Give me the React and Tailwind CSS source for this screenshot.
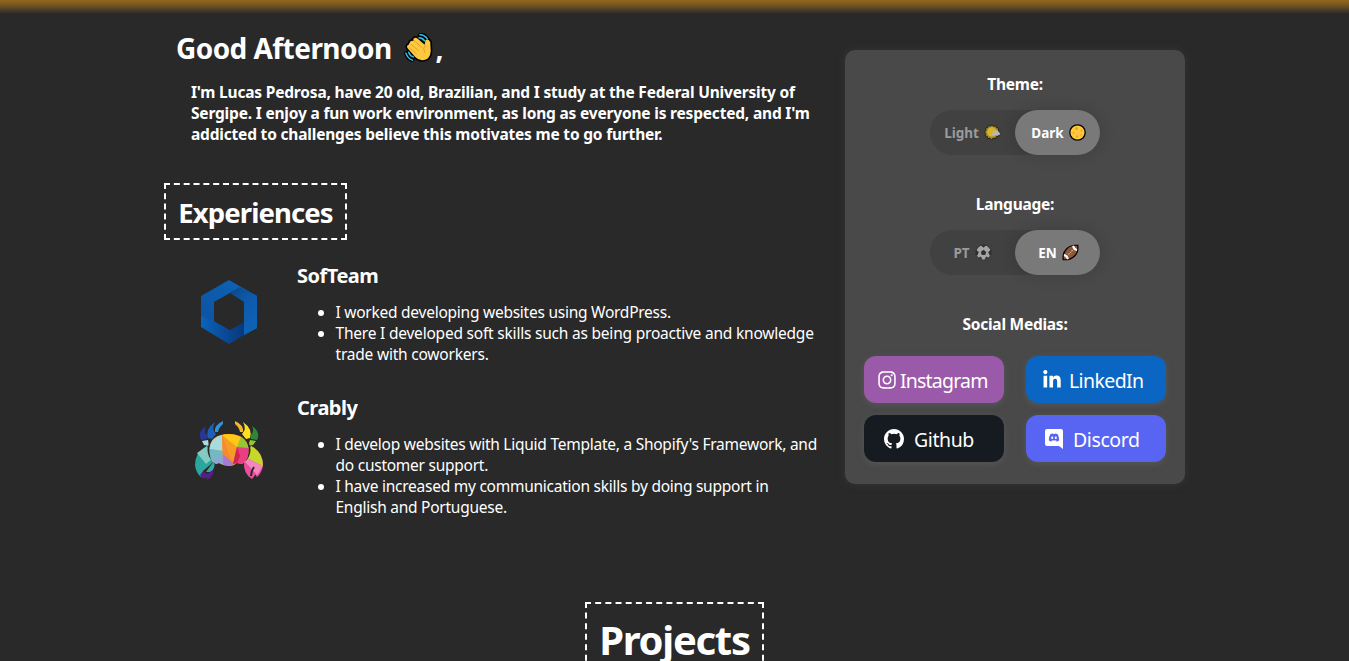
import React from "react";
import { FaInstagram, FaLinkedinIn } from "react-icons/fa";

function WaveHand() {
  return (
    <svg viewBox="0 0 32 32" className="h-[31px] w-[30px] shrink-0" fill="none">
      <path d="M6 11 Q7 8 10 9 L10 7 Q12 4 15 7 L22 13 L23 8 Q26 6 28 10 L28.5 20 Q28 29 20 29.5 Q16 30 12 26 L4 17 Q2 14 5 13Z" stroke="#000" strokeWidth="3.500" strokeLinejoin="round" />
      <path d="M17 3Q22 2 25 7M2.5 22Q4 28 9 29" stroke="#000" strokeWidth="4.500" strokeLinecap="round" />
      <path d="M6 11 Q7 8 10 9 L10 7 Q12 4 15 7 L22 13 L23 8 Q26 6 28 10 L28.5 20 Q28 29 20 29.5 Q16 30 12 26 L4 17 Q2 14 5 13Z" fill="#ffc83d" />
      <path d="M11 9l8 7M7.500 12.500l8 7M6 16.500l7 6M22.500 14q-3 3.500 0 7.500" stroke="#dc9a28" strokeWidth=".9" strokeLinecap="round" />
      <path d="M17 2.500Q22 2.500 25 7M16 5.500q4 0 6 3.500M2 22Q4 28 9 29.500M5 21Q6 25 10 26" stroke="#35c1f1" strokeWidth="1.600" strokeLinecap="round" />
    </svg>
  );
}

function Sun() {
  return (
    <svg viewBox="0 0 17 17" className="h-[17px] w-[17px] shrink-0">
      <path d="M8 .8l1.500 1.600 2.200-.9.6 2.200 2.400.4-.3 2.300 1.600 1.900-1.600 1.700.3 2.300-2.500.5-.9 2.200-2.100-.9-1.700 1.600-1.600-1.600-2.300.6-.4-2.400-2.300-.6.800-2.200L.5 8l1.500-1.700-.5-2.200 2.300-.5.600-2.200 2.100.8z" fill="#a98e22" stroke="#252525" strokeWidth="1" />
      <circle cx="7.800" cy="8" r="4.700" fill="#d6b42b" />
      <path d="M8.500 11.300q-1.500-2.800 1.300-3.200.8-3 3.300-1.600 1.200.7 1.200 1.900 1.800 0 1.800 1.400t-2 1.500z" fill="#b8b8b8" />
    </svg>
  );
}

function Moon() {
  return (
    <svg viewBox="0 0 17 17" className="h-[17px] w-[17px] shrink-0">
      <circle cx="8.500" cy="8.500" r="7.700" fill="#ffc83d" stroke="#000" strokeWidth="1.300" />
      <g fill="#e9a625"><circle cx="7.500" cy="4.500" r="1.500" /><circle cx="4.500" cy="9" r="1" /><circle cx="12.500" cy="6.500" r="1" /><circle cx="8" cy="12.500" r="1.200" /><circle cx="12" cy="11" r=".8" /></g>
    </svg>
  );
}

function Soccer() {
  return (
    <svg viewBox="0 0 17 17" className="h-[17px] w-[17px] shrink-0">
      <circle cx="8.500" cy="8.500" r="7.700" fill="#a5a5a5" stroke="#2c2c2c" strokeWidth="1" />
      <g fill="#303030">
        <path d="M8.500 5.800l2.700 2.100-1 3.100H6.800l-1-3.100z" />
        <path d="M5.700.9h5.600L8.500 3.700zM.8 5.700l3 2.400-1.300 3.500-1.500-.8zM16.200 5.700l-3 2.400 1.300 3.500 1.500-.8zM3 14l2.900-1.600 1.500 3.400zM14 14l-2.900-1.600-1.500 3.400z" />
      </g>
    </svg>
  );
}

function Football() {
  return (
    <svg viewBox="0 0 18 18" className="h-[17px] w-[17px] shrink-0">
      <path d="M1.300 16.500Q.3 9.500 5 5T16.700 1.500q1 7-3.700 11.500T1.300 16.500z" fill="#8b5738" stroke="#000" strokeWidth="1.300" />
      <path d="M2.300 10.500q4 1 5 5.500l-2 .5Q4.500 13.500 1.900 12.800zM15.700 7.500q-4-1-5-5.500l2-.5q.8 3 3.400 3.700z" fill="#fff" />
      <path d="M6 12l6-6M6.500 10l1.500 1.500M8.300 8.300l1.500 1.500M10 6.500L11.500 8" stroke="#e8d8cc" strokeWidth=".7" strokeDasharray="1 .6" />
    </svg>
  );
}

function GithubMark() {
  return (
    <svg viewBox="0 0 16 16" className="h-[20px] w-[20px] shrink-0" fill="currentColor">
      <path d="M8 0C3.580 0 0 3.580 0 8c0 3.540 2.290 6.530 5.470 7.590.4.070.55-.17.55-.38 0-.19-.010-.82-.010-1.490-2.010.37-2.530-.49-2.690-.94-.090-.23-.48-.94-.82-1.130-.28-.15-.68-.52-.010-.53.630-.010 1.080.58 1.230.82.72 1.210 1.870.87 2.330.66.070-.52.28-.87.510-1.070-1.780-.2-3.640-.89-3.640-3.950 0-.87.31-1.590.82-2.150-.080-.2-.36-1.020.080-2.120 0 0 .67-.21 2.200.82a7.600 7.600 0 0 1 4 0c1.530-1.040 2.200-.82 2.200-.82.44 1.100.16 1.920.080 2.120.51.56.82 1.270.82 2.150 0 3.070-1.870 3.750-3.650 3.950.29.25.54.73.54 1.480 0 1.070-.010 1.930-.010 2.200 0 .21.15.46.55.38A8.010 8.010 0 0 0 16 8c0-4.420-3.580-8-8-8z" />
    </svg>
  );
}

function DiscordMark() {
  return (
    <svg viewBox="0 0 18 20" className="h-[20px] w-[18px] shrink-0">
      <path d="M2 0h14q2 0 2 2v18l-4-3H2q-2 0-2-2V2Q0 0 2 0z" fill="#fff" />
      <path d="M5.300 5.300Q7 4.300 8 4.600l.3.500h1.400l.3-.5q1-.3 2.700.7 1.600 3 1.500 6-1.200 1.200-2.700 1.200l-.6-.8.9-.6q-2.800 1-5.600 0l.9.600-.6.800q-1.500 0-2.700-1.200-.1-3 1.500-6z" fill="#5865f2" />
      <ellipse cx="7.200" cy="8.800" rx="1" ry="1.200" fill="#fff" /><ellipse cx="10.800" cy="8.800" rx="1" ry="1.200" fill="#fff" />
    </svg>
  );
}

function HexLogo() {
  return (
    <svg viewBox="0 0 58 64" className="h-[64px] w-[58px]">
      <defs>
        <linearGradient id="ha" x1="0" y1="1" x2="1" y2="0"><stop offset="0" stopColor="#0d509f" /><stop offset="1" stopColor="#0c66ba" /></linearGradient>
        <linearGradient id="hb" x1="0" y1="0" x2=".6" y2="1"><stop offset="0" stopColor="#0b4384" /><stop offset=".45" stopColor="#0e59ab" /><stop offset="1" stopColor="#0d62b5" /></linearGradient>
        <linearGradient id="hc" x1="0" y1="0" x2="1" y2="0"><stop offset="0" stopColor="#0b62bc" /><stop offset="1" stopColor="#08387b" /></linearGradient>
      </defs>
      <path d="M1 16L29 0 57 16V48L44 55V22L30 14 14 22V49L1 41z" fill="url(#ha)" />
      <path d="M29 13L40 7 57 16V48L44 55V22z" fill="url(#hb)" />
      <path d="M1 36L14 41 30 50 44 42V55L29 64 1 47z" fill="url(#hc)" />
      <path d="M14 22L30 13 44 22V41L30 50 14 41z" fill="#292929" />
    </svg>
  );
}

function CrabLogo() {
  return (
    <svg viewBox="0 0 70 60" className="h-[60px] w-[70px]">
      <path d="M12 5Q3 11 7 19L13 18 14 15Q9 11 12 5z" fill="#263795" />
      <path d="M21 1Q11 8 14 17L18 18 22 13Q17 8 21 1z" fill="#1c5fb9" />
      <path d="M29 0Q20 4 21 11L24 11Q25 6 29 3z" fill="#3392d8" />
      <path d="M41 0Q50 4 49 11L46 11Q45 6 41 3z" fill="#f2b62a" />
      <path d="M49 1Q59 8 56 17L52 18 48 13Q53 8 49 1z" fill="#ffe01f" />
      <path d="M58 5Q67 11 63 19L57 18 56 15Q61 11 58 5z" fill="#2c8736" />
      <path d="M8 20l6-1 1 6-5-1z" fill="#a6dce6" />
      <path d="M56 19l6 1-3 4-5 1z" fill="#95c72a" />
      <path d="M13 25Q1 31 1 44 2 52 7 56L9 50 16 44 20 40 17 34z" fill="#2ba69e" />
      <path d="M13 25L3 32 12 43 19 37z" fill="#83cac0" />
      <path d="M6 54l4-5q0 5 5 3 2-1 4-5 2 8-6 12 1-4-4-1z" fill="#542087" />
      <path d="M12 51l8-11q2 8-4 11z" fill="#35aaa4" />
      <path d="M57 25Q69 31 69 44 68 52 63 56L55 44 50 40 53 34z" fill="#ec4d9e" />
      <path d="M57 25q12 6 12 20L51 36z" fill="#c4d928" />
      <path d="M51 36l18 9-6 9-9-8-4-6z" fill="#f287bb" />
      <path d="M55 45l7 8-4 5q-9-5-8-18z" fill="#ec4d9e" />
      <path d="M60 46q-3 4-3 9" fill="none" stroke="#292929" strokeWidth="2" />
      <ellipse cx="35" cy="29" rx="21.500" ry="17.500" fill="#292929" />
      <path d="M35 13Q17 13 15.500 27 15 39 22 43L25 42 29 44 35 45 40 44 43 42 48 43Q55 39 54.500 27 52 13 35 13z" fill="#f69b24" />
      <path d="M28 14Q17 16 15.500 28l13 2z" fill="#a5dce1" />
      <path d="M15.500 28l13 2 1 6-11 5q-3-4-3-13z" fill="#73b9c5" />
      <path d="M18 40l11-6 1 10-5-2-3 1z" fill="#8fa6d5" />
      <path d="M28 14l1 28 7 3 4-1-5-11z" fill="#f58a32" />
      <path d="M29 33l11 10-5 2-6-1z" fill="#a879d5" />
      <path d="M28 14q9-3 19 2L43 26z" fill="#ffca15" />
      <path d="M47 16q6 4 7.500 11L43 26z" fill="#99c637" />
      <path d="M43 26l11.500 1q1 11-6.500 16l-5-1-4 1z" fill="#e83e83" />
      <path d="M43 26l-4 17 4-1 3-7z" fill="#cf254f" />
    </svg>
  );
}

function Toggle({ left, right, leftIcon, rightIcon }) {
  return (
    <div className="flex h-[45px] w-[170px] rounded-full bg-[#414141] text-[13.500px] font-bold tracking-normal">
      <button className="flex h-full w-[85px] items-center justify-center gap-[5px] text-[#9b9b9b]">
        <span className="pt-[1px]">{left}</span>{leftIcon}
      </button>
      <button className="flex h-full w-[85px] items-center justify-center gap-[5px] rounded-full bg-[#797979] pl-[2px] shadow-[0_0_16px_rgba(0,0,0,0.15)]">
        <span className="pt-[1px]">{right}</span>{rightIcon}
      </button>
    </div>
  );
}

function Experience({ logo, logoClass, title, children, className }) {
  return (
    <article className={"flex " + className}>
      <div className={"flex w-[129px] shrink-0 justify-center " + logoClass}>{logo}</div>
      <div className="pl-[4px]">
        <h3 className="text-[20px] font-bold leading-[27px] tracking-[-0.5px]">{title}</h3>
        <ul className="mt-[13px] list-disc pl-[38.500px] text-[15.500px] leading-[21px] tracking-[-0.25px] whitespace-nowrap">{children}</ul>
      </div>
    </article>
  );
}

const button = "flex h-[47px] w-[140px] items-center rounded-[12px] text-[19.500px] shadow-[0_2px_6px_rgba(100,100,100,0.5)] ";

export default function App() {
  return (
    <div className="h-[661px] overflow-hidden bg-[#292929] font-['Noto_Sans',sans-serif] text-white">
      <div className="h-[14px] bg-linear-to-b from-[#936719] via-[#765621] via-35% to-[#292929]" />
      <main className="flex pl-[164px]">
        <section className="w-[681px] shrink-0 pt-[15px]">
          <h1 className="flex h-[38px] items-center pl-[12px] text-[28px] font-bold leading-[38px] tracking-[-0.55px] whitespace-nowrap">
            <span>Good Afternoon</span><span className="ml-[12px] mb-[2px]"><WaveHand /></span><span className="ml-[2px]">,</span>
          </h1>
          <p className="mt-[15px] pl-[27px] text-[15.500px] font-bold leading-[21px] tracking-[-0.19px] whitespace-nowrap">
            I'm Lucas Pedrosa, have 20 old, Brazilian, and I study at the Federal University of<br />
            Sergipe. I enjoy a fun work environment, as long as everyone is respected, and I'm<br />
            addicted to challenges believe this motivates me to go further.
          </p>
          <h2 className="mt-[38px] flex h-[57px] w-[183px] items-center justify-center border-2 border-dashed border-white pt-[3px] text-[27.500px] font-bold tracking-[-0.9px]">Experiences</h2>
          <Experience logo={<HexLogo />} logoClass="pt-[18px]" title="SofTeam" className="mt-[22px]">
            <li>I worked developing websites using WordPress.</li>
            <li className="tracking-[-0.21px]">There I developed soft skills such as being proactive and knowledge<br />trade with coworkers.</li>
          </Experience>
          <Experience logo={<CrabLogo />} logoClass="pt-[27px]" title="Crably" className="mt-[29px]">
            <li>I develop websites with Liquid Template, a Shopify's Framework, and<br />do customer support.</li>
            <li>I have increased my communication skills by doing support in<br />English and Portuguese.</li>
          </Experience>
        </section>
        <aside className="mt-[36px] flex h-[434px] w-[340px] flex-col items-center rounded-[10px] bg-[#494949] pt-[24px] text-[15.500px] font-bold tracking-[-0.25px] shadow-[0_0_10px_rgba(80,80,80,0.35)]">
          <h4 className="h-[21px] leading-[21px]">Theme:</h4>
          <div className="mt-[15px]"><Toggle left="Light" right="Dark" leftIcon={<Sun />} rightIcon={<Moon />} /></div>
          <h4 className="mt-[39px] h-[21px] leading-[21px]">Language:</h4>
          <div className="mt-[15px]"><Toggle left="PT" right="EN" leftIcon={<Soccer />} rightIcon={<Football />} /></div>
          <h4 className="mt-[39px] h-[21px] leading-[21px]">Social Medias:</h4>
          <div className="mt-[21px] grid grid-cols-2 gap-x-[22px] gap-y-[12px] font-normal">
            <a className={button + "bg-[#9b59aa] pl-[13px] tracking-[-0.8px]"}><FaInstagram size={20} /><span className="ml-[3px] mt-[3px]">Instagram</span></a>
            <a className={button + "bg-[#0a66c2] pl-[16px] tracking-[-0.6px]"}><FaLinkedinIn size={20} /><span className="ml-[7px] mt-[3px]">LinkedIn</span></a>
            <a className={button + "bg-[#161b22] pl-[20px] tracking-[-0.4px]"}><GithubMark /><span className="ml-[10px] mt-[3px]">Github</span></a>
            <a className={button + "bg-[#5865f2] pl-[19px] tracking-[-0.4px]"}><DiscordMark /><span className="ml-[10px] mt-[3px]">Discord</span></a>
          </div>
        </aside>
      </main>
      <div className="flex justify-center">
        <h2 className="mt-[84px] h-[80px] w-[179px] border-2 border-dashed border-white pt-[7px] text-center text-[40px] font-bold leading-[58px] tracking-[-1.300px]">Projects</h2>
      </div>
    </div>
  );
}
